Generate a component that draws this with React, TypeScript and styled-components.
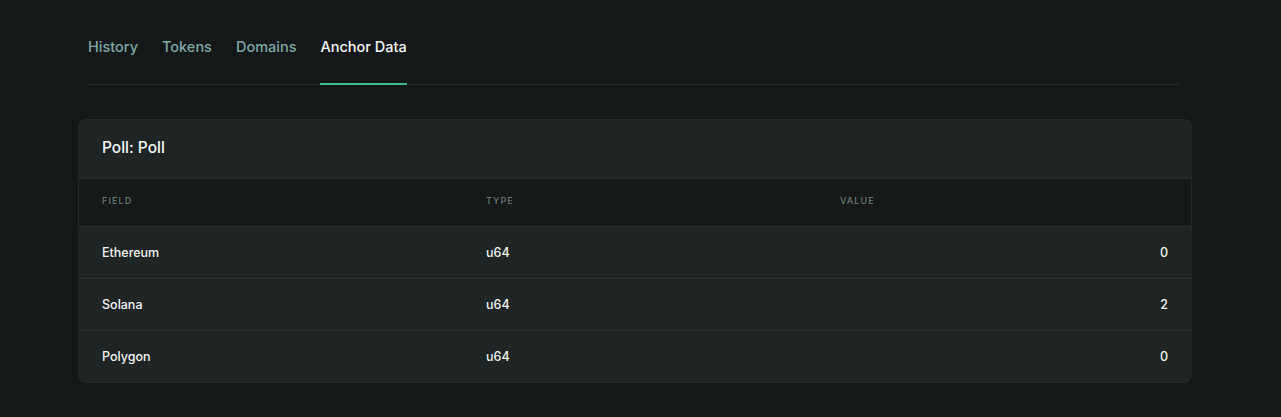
import React from "react";
import styled, { createGlobalStyle } from "styled-components";

const Global = createGlobalStyle`
  html, body { margin: 0; padding: 0; background: #151818; }
  body { font-family: Inter, "Noto Sans", sans-serif; color: #f2f5f4; }
`;

const Page = styled.div`
  padding: 28px 89px 34px 78px;
  box-sizing: border-box;
  width: 1281px;
  min-height: 417px;
`;

const TabBar = styled.nav`
  display: flex;
  gap: 24px;
  margin: 0 12px 0 10px;
  border-bottom: 1px solid #252b2a;
  margin-bottom: 34px;
`;

const Tab = styled.div<{ $active?: boolean }>`
  font-size: 14.5px;
  font-weight: 500;
  line-height: 20px;
  padding: 9px 0 26px;
  margin-bottom: -1px;
  color: ${(p) => (p.$active ? "#f4f7f6" : "#7daaa7")};
  border-bottom: 2px solid ${(p) => (p.$active ? "#3fb68b" : "transparent")};
`;

const Card = styled.section`
  background: #1f2424;
  border: 1px solid #232928;
  border-radius: 8px;
  overflow: hidden;
`;

const CardHeader = styled.div`
  height: 59px;
  box-sizing: border-box;
  display: flex;
  align-items: center;
  padding: 0 23px 4px;
  font-size: 15.5px;
  font-weight: 500;
  color: #f4f7f6;
  border-bottom: 1px solid #282e2d;
`;

const Row = styled.div<{ $head?: boolean }>`
  display: grid;
  grid-template-columns: 384px 354px 1fr;
  align-items: center;
  box-sizing: border-box;
  height: ${(p) => (p.$head ? "47px" : "52px")};
  padding-bottom: ${(p) => (p.$head ? "4px" : "0")};
  background: ${(p) => (p.$head ? "#151918" : "#1f2424")};
  border-top: ${(p) => (p.$head ? "none" : "1px solid #2a302f")};
`;

const HeadCell = styled.div`
  padding: 0 23px;
  font-size: 9px;
  letter-spacing: 1.1px;
  text-transform: uppercase;
  color: #6a7b77;
  font-weight: 500;
`;

const Cell = styled.div<{ $right?: boolean }>`
  padding: 0 23px;
  font-size: 12.5px;
  font-weight: 500;
  color: #f2f5f4;
  text-align: ${(p) => (p.$right ? "right" : "left")};
`;

const rows = [
  { field: "Ethereum", type: "u64", value: "0" },
  { field: "Solana", type: "u64", value: "2" },
  { field: "Polygon", type: "u64", value: "0" },
];

export default function App() {
  return (
    <Page>
      <Global />
      <TabBar>
        <Tab>History</Tab>
        <Tab>Tokens</Tab>
        <Tab>Domains</Tab>
        <Tab $active>Anchor Data</Tab>
      </TabBar>
      <Card>
        <CardHeader>Poll: Poll</CardHeader>
        <Row $head>
          <HeadCell>Field</HeadCell>
          <HeadCell>Type</HeadCell>
          <HeadCell>Value</HeadCell>
        </Row>
        {rows.map((r) => (
          <Row key={r.field}>
            <Cell>{r.field}</Cell>
            <Cell>{r.type}</Cell>
            <Cell $right>{r.value}</Cell>
          </Row>
        ))}
      </Card>
    </Page>
  );
}
